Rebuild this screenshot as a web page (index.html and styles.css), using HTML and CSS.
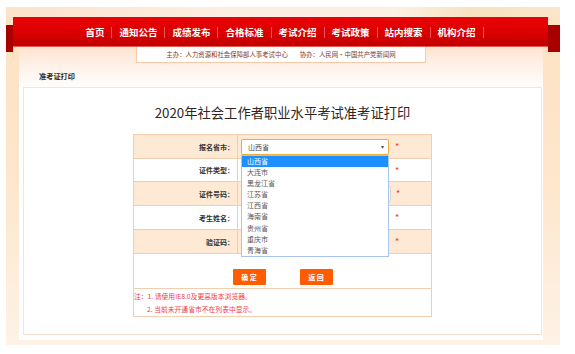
FILE: index.html
```html
<!DOCTYPE html>
<html lang="zh-CN">

<head>
    <meta charset="UTF-8">
    <meta name="viewport" content="width=device-width, initial-scale=1.0">
    <title>准考证打印</title>
    <link rel="stylesheet" href="styles.css">
</head>

<body>
    <div class="page">
        <div class="topband"></div>

        <div class="navrow">
            <div class="wing wing-left"></div>
            <ul class="nav">
                <li>首页</li>
                <li>通知公告</li>
                <li>成绩发布</li>
                <li>合格标准</li>
                <li>考试介绍</li>
                <li>考试政策</li>
                <li>站内搜索</li>
                <li>机构介绍</li>
            </ul>
            <div class="wing wing-right"></div>
        </div>

        <div class="panel">
            <div class="panel-head">
                <div class="sponsor">
                    <span>主办：人力资源和社会保障部人事考试中心</span>
                    <span>协办：人民网・中国共产党新闻网</span>
                </div>
                <div class="crumb">准考证打印</div>
            </div>

            <div class="content">
                <h1>2020年社会工作者职业水平考试准考证打印</h1>

                <table class="form">
                    <tr class="alt r1">
                        <td class="label">报名省市：</td>
                        <td class="field">
                            <div class="cell">
                                <div class="select-wrap">
                                    <div class="select focus">山西省<span class="arrow">▾</span></div>
                                    <ul class="dropdown">
                                        <li class="active">山西省</li>
                                        <li>大连市</li>
                                        <li>黑龙江省</li>
                                        <li>江苏省</li>
                                        <li>江西省</li>
                                        <li>海南省</li>
                                        <li>贵州省</li>
                                        <li>重庆市</li>
                                        <li>青海省</li>
                                    </ul>
                                </div>
                                <span class="star">*</span>
                            </div>
                        </td>
                    </tr>
                    <tr class="r2">
                        <td class="label">证件类型：</td>
                        <td class="field"><div class="cell"><div class="select"></div><span class="star">*</span></div></td>
                    </tr>
                    <tr class="alt r3">
                        <td class="label">证件号码：</td>
                        <td class="field"><div class="cell"><div class="input wide"></div><span class="star">*</span></div></td>
                    </tr>
                    <tr class="r4">
                        <td class="label">考生姓名：</td>
                        <td class="field"><div class="cell"><div class="input"></div><span class="star">*</span></div></td>
                    </tr>
                    <tr class="alt r5">
                        <td class="label">验证码：</td>
                        <td class="field"><div class="cell"><div class="input"></div><span class="star">*</span></div></td>
                    </tr>
                    <tr class="actions">
                        <td colspan="2">
                            <div class="buttons">
                                <button>确 定</button>
                                <button>返 回</button>
                            </div>
                        </td>
                    </tr>
                    <tr class="notes">
                        <td colspan="2">
                            <p>注：1. 请使用IE8.0及更高版本浏览器。</p>
                            <p class="indent">2. 当前未开通省市不在列表中显示。</p>
                        </td>
                    </tr>
                </table>
            </div>
        </div>
    </div>
</body>

</html>
```

FILE: styles.css
```css
body {
    margin: 0;
    background: #fff;
    font-family: "Noto Sans CJK SC", "Noto Sans", sans-serif;
    color: #333;
}

.page {
    width: 554px;
    height: 338px;
    margin: 7px 0 0 6px;
    background: linear-gradient(180deg, #fde2c3 0%, #fde6cc 50%, #fdf2e6 100%);
}

.topband {
    height: 10px;
    background: linear-gradient(90deg, #fbe3cc 0%, #fbeee2 40%, #fbf0e4 70%, #f6e2bf 85%, #fbe6cc 100%);
}

/* red menu bar */
.navrow {
    display: flex;
    height: 30px;
}

.wing {
    height: 27px;
    margin-top: 8px;
    background: #a80000;
}

.wing-left {
    width: 7px;
}

.wing-right {
    width: 12px;
}

.nav {
    flex: 1;
    display: flex;
    justify-content: center;
    align-items: center;
    margin: 0;
    padding: 0 0 0 1px;
    list-style: none;
    background: linear-gradient(180deg, #ea0306 0%, #dc0000 50%, #c00000 100%);
    box-shadow: inset 0 -1px 0 #e45a50;
}

.nav li {
    padding: 0 7px;
    border-right: 1px solid #f2565a;
    color: #fff;
    font-size: 9.5px;
    font-weight: bold;
    line-height: 11px;
}

/* white panel */
.panel {
    height: 293px;
    margin: 0 17px 0 13px;
    background: #fff;
    display: flex;
    flex-direction: column;
}

.panel-head {
    height: 40px;
    background: linear-gradient(180deg, #fde3cf 0%, #fef1e8 45%, #fffdfb 100%);
}

.sponsor {
    width: 288px;
    height: 15px;
    margin: 0 auto;
    background: #fff;
    border: 1px solid #f6c9a9;
    border-top: none;
    display: flex;
    justify-content: center;
    align-items: center;
    gap: 12px;
    font-size: 6.4px;
    color: #7c3a2c;
}

.crumb {
    margin: 8px 0 0 20px;
    font-size: 7.2px;
    font-weight: bold;
    line-height: 10px;
    color: #2a2a2a;
}

.content {
    flex: 1;
    margin: 0 1px 5px 4px;
    border: 1px solid #f5e3d7;
    border-bottom-color: #f1ddd0;
}

h1 {
    margin: 16px 0 12px;
    text-align: center;
    font-size: 13.3px;
    font-weight: normal;
    line-height: 18px;
    color: #2f2520;
}

/* form table */
.form {
    width: 299px;
    margin: 0 auto;
    border-collapse: collapse;
    line-height: 10px;
}

.form td {
    border: 1px solid #f3cdb0;
    padding: 0;
}

.form tr.r1 { height: 24px; }
.form tr.r2 { height: 23px; }
.form tr.r3 { height: 24px; }
.form tr.r4 { height: 24px; }
.form tr.r5 { height: 24px; }

.form tr.alt {
    background: #fde9d4;
}

.label {
    width: 100px;
    padding-right: 3px !important;
    text-align: right;
    font-size: 7px;
    font-weight: bold;
    color: #333;
}

.field {
    padding-left: 3px !important;
}

.cell {
    display: flex;
    align-items: center;
    height: 16px;
}

.select-wrap {
    position: relative;
    height: 16px;
}

.select,
.input {
    box-sizing: border-box;
    width: 148px;
    height: 16px;
    border: 1px solid #d4d4d4;
    border-radius: 2px;
    background: #fff;
}

.input.wide {
    width: 150px;
}

.select.focus {
    position: relative;
    padding-left: 6px;
    border-color: #f0ac3a;
    font-size: 7px;
    line-height: 14px;
    color: #444;
}

.arrow {
    position: absolute;
    right: 4px;
    top: 0;
    font-size: 6px;
    color: #555;
}

.star {
    margin-left: 6px;
    color: #f33;
    font-size: 9px;
    line-height: 9px;
}

.input.wide + .star {
    margin-left: 5px;
}

.dropdown {
    position: absolute;
    top: 16px;
    left: 0;
    z-index: 5;
    box-sizing: border-box;
    width: 148px;
    margin: 0;
    padding: 0;
    list-style: none;
    background: #fff;
    border: 1px solid #a8c6ec;
}

.dropdown li {
    height: 11.2px;
    padding-left: 5px;
    font-size: 7px;
    line-height: 11px;
    color: #555;
}

.dropdown li.active {
    background: #1e8ffe;
    color: #fff;
}

.form tr.actions {
    height: 35px;
}

.buttons {
    display: flex;
    justify-content: center;
    gap: 34px;
    padding: 14px 0 3px;
}

button {
    width: 33px;
    height: 16px;
    padding: 0;
    border: none;
    border-radius: 1px;
    background: #ff5c00;
    color: #fff;
    font-family: inherit;
    font-size: 7px;
    font-weight: bold;
}

.form tr.notes {
    height: 28px;
}

.notes p {
    margin: 0;
    font-size: 6.8px;
    line-height: 13px;
    color: #f03c46;
}

.notes p.indent {
    padding-left: 13px;
}
```
